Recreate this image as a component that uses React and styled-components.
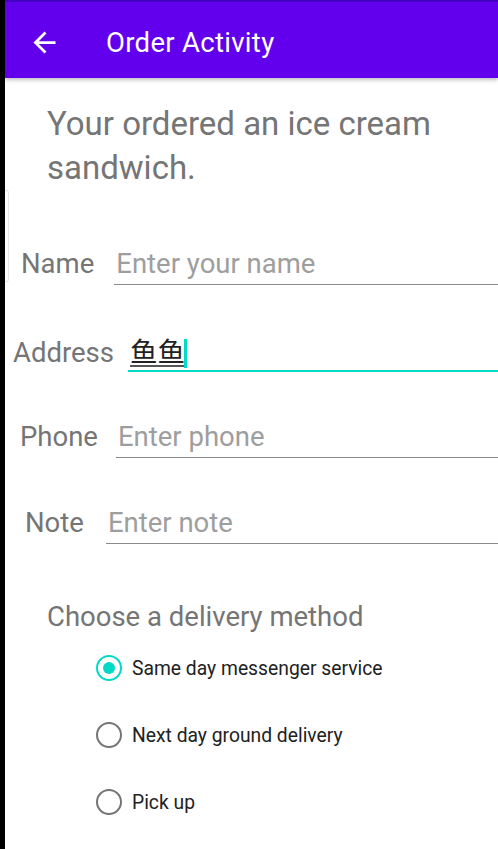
import React, { useState } from "react";
import styled, { createGlobalStyle } from "styled-components";

const GlobalStyle = createGlobalStyle`
  html, body {
    margin: 0;
    padding: 0;
    background: #ffffff;
    font-family: Roboto, "Noto Sans CJK SC", sans-serif;
  }
`;

const Screen = styled.div`
  display: flex;
  width: 498px;
  height: 849px;
  overflow: hidden;
  background: #fff;
`;

const Edge = styled.div`
  width: 5px;
  flex: none;
  background: #000;
`;

const Main = styled.div`
  flex: 1;
  display: flex;
  flex-direction: column;
  position: relative;
  min-width: 0;
`;

const Toolbar = styled.header`
  box-sizing: border-box;
  height: 78px;
  padding-top: 4px;
  border-top: 2px solid #4300c4;
  background: #6200ee;
  display: flex;
  align-items: center;
  box-shadow: 0 2px 4px rgba(0, 0, 0, 0.25);
  position: relative;
  z-index: 1;
`;

const BackButton = styled.button`
  border: none;
  background: none;
  padding: 0;
  margin-left: 23px;
  width: 33px;
  height: 33px;
  display: flex;
  color: #fff;
`;

const Title = styled.h1`
  margin: 0 0 0 45px;
  font-size: 27.5px;
  font-weight: 400;
  color: #fff;
  letter-spacing: 0.3px;
`;

const Heading = styled.p`
  margin: 24px 40px 0 42px;
  font-size: 33px;
  line-height: 44px;
  color: #757575;
`;

const Field = styled.label`
  display: flex;
  align-items: baseline;
  margin-top: ${p => p.top}px;
  padding-left: ${p => p.indent}px;
`;

const FieldLabel = styled.span`
  font-size: 27.5px;
  color: #757575;
  margin-right: ${p => p.gap}px;
`;

const InputWrap = styled.span`
  flex: 1;
  min-width: 0;
  display: flex;
  position: relative;
  margin-right: -10px;
`;

const Input = styled.input`
  flex: 1;
  min-width: 0;
  border: none;
  border-bottom: ${p => (p.focused ? "2px solid #03dac5" : "1.5px solid #8a8a8a")};
  outline: none;
  background: none;
  padding: 0 0 4px 2px;
  font-family: Roboto, "Noto Sans CJK SC", sans-serif;
  font-size: 27.5px;
  color: #212121;
  text-decoration: ${p => (p.focused ? "underline" : "none")};
  text-decoration-color: #555;
  text-underline-offset: 3px;
  &::placeholder {
    color: #9e9e9e;
  }
`;

const Caret = styled.span`
  position: absolute;
  left: 56px;
  top: 6px;
  width: 2.5px;
  height: 29px;
  background: #03dac5;
`;

const ScrollHint = styled.span`
  position: absolute;
  left: 0;
  top: 190px;
  width: 3px;
  height: 90px;
  border: 1px solid #e6e6e6;
  border-left: none;
  border-radius: 0 3px 3px 0;
`;

const Section = styled.p`
  margin: 56px 0 0 42px;
  font-size: 27.5px;
  color: #757575;
`;

const Options = styled.div`
  display: flex;
  flex-direction: column;
  gap: 41px;
  margin: 22px 0 0 91px;
`;

const Option = styled.label`
  display: flex;
  align-items: center;
  gap: 10px;
  font-size: 19.3px;
  color: #212121;
  cursor: pointer;
`;

const Radio = styled.span`
  width: 22px;
  height: 22px;
  border-radius: 50%;
  border: 2.5px solid ${p => (p.checked ? "#03dac5" : "#757575")};
  display: flex;
  align-items: center;
  justify-content: center;
  &::after {
    content: "";
    width: 12px;
    height: 12px;
    border-radius: 50%;
    background: ${p => (p.checked ? "#03dac5" : "transparent")};
  }
`;

const fields = [
  { label: "Name", placeholder: "Enter your name", indent: 16, gap: 20, top: 57 },
  { label: "Address", placeholder: "", value: "鱼鱼", indent: 8, gap: 14, top: 48, focused: true },
  { label: "Phone", placeholder: "Enter phone", indent: 15, gap: 18, top: 48 },
  { label: "Note", placeholder: "Enter note", indent: 20, gap: 22, top: 48 },
];

const methods = ["Same day messenger service", "Next day ground delivery", "Pick up"];

export default function App() {
  const [method, setMethod] = useState(0);
  return (
    <>
      <GlobalStyle />
      <Screen>
        <Edge />
        <Main>
          <Toolbar>
            <BackButton aria-label="Back">
              <svg width="33" height="33" viewBox="0 0 24 24" fill="currentColor">
                <path d="M20 11H7.83l5.59-5.59L12 4l-8 8 8 8 1.41-1.41L7.83 13H20v-2z" />
              </svg>
            </BackButton>
            <Title>Order Activity</Title>
          </Toolbar>
          <ScrollHint />
          <Heading>Your ordered an ice cream sandwich.</Heading>
          {fields.map(f => (
            <Field key={f.label} indent={f.indent} top={f.top}>
              <FieldLabel gap={f.gap}>{f.label}</FieldLabel>
              <InputWrap>
                <Input
                  placeholder={f.placeholder}
                  defaultValue={f.value}
                  focused={f.focused}
                />
                {f.focused && <Caret />}
              </InputWrap>
            </Field>
          ))}
          <Section>Choose a delivery method</Section>
          <Options>
            {methods.map((m, i) => (
              <Option key={m} onClick={() => setMethod(i)}>
                <Radio checked={method === i} />
                {m}
              </Option>
            ))}
          </Options>
        </Main>
      </Screen>
    </>
  );
}
